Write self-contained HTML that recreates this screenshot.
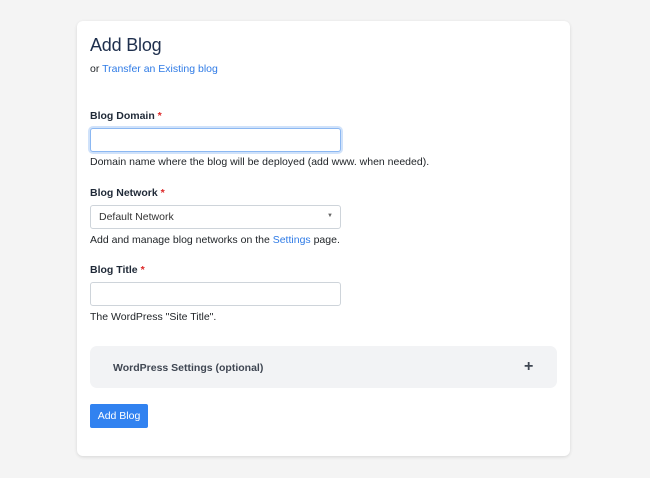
<!DOCTYPE html>
<html><head><style>
*{margin:0;padding:0;box-sizing:border-box}
body{width:650px;height:478px;background:#f4f4f4;font-family:"Liberation Sans",sans-serif;position:relative;overflow:hidden;color:#212529}
.card{position:absolute;left:77px;top:21px;width:493px;height:435px;background:#fff;border-radius:6px;box-shadow:0 1px 3px rgba(0,0,0,.12)}
.a{position:absolute;white-space:nowrap}
.s{font-size:10.5px;line-height:13px}
.lbl{font-weight:bold;color:#1f2937}
.req{color:#dc2626}
a{color:#2f7be6;text-decoration:none}
.inp{position:absolute;left:90px;width:251px;height:24px;border:1px solid #ced4da;border-radius:3px;background:#fff}
.foc{border-color:#8cb8f2;box-shadow:0 0 0 2px rgba(100,160,240,.3)}
.acc{position:absolute;left:90px;top:346px;width:467px;height:42px;background:#f2f3f5;border-radius:7px}
.btn{position:absolute;left:90px;top:404px;width:58px;height:24px;background:#3182f0;border-radius:2px;color:#fff;font-size:10.5px;line-height:24px;text-align:center}
</style></head><body>
<div class="card"></div>
<div class="a" style="left:90px;top:35px;font-size:18px;color:#1e2f4d;letter-spacing:-0.2px">Add Blog</div>
<div class="a s" style="left:90px;top:63px">or <a>Transfer an Existing blog</a></div>
<div class="a s lbl" style="left:90px;top:110px">Blog Domain <span class="req">*</span></div>
<div class="inp foc" style="top:128px"></div>
<div class="a s" style="left:90px;top:156px">Domain name where the blog will be deployed (add www. when needed).</div>
<div class="a s lbl" style="left:90px;top:187px">Blog Network <span class="req">*</span></div>
<div class="inp" style="top:205px"><span class="a" style="left:8px;top:5px;font-size:10.5px;color:#333">Default Network</span><span class="a" style="right:7px;top:7px;font-size:6px;color:#666">▼</span></div>
<div class="a s" style="left:90px;top:234px">Add and manage blog networks on the <a>Settings</a> page.</div>
<div class="a s lbl" style="left:90px;top:264px">Blog Title <span class="req">*</span></div>
<div class="inp" style="top:282px"></div>
<div class="a s" style="left:90px;top:311px">The WordPress "Site Title".</div>
<div class="acc"><span class="a s" style="left:23px;top:16px;font-weight:bold;color:#3f4652">WordPress Settings (optional)</span><span class="a" style="left:434px;top:12px;font-size:16px;font-weight:bold;color:#3f4652">+</span></div>
<div class="btn">Add Blog</div>
</body></html>
